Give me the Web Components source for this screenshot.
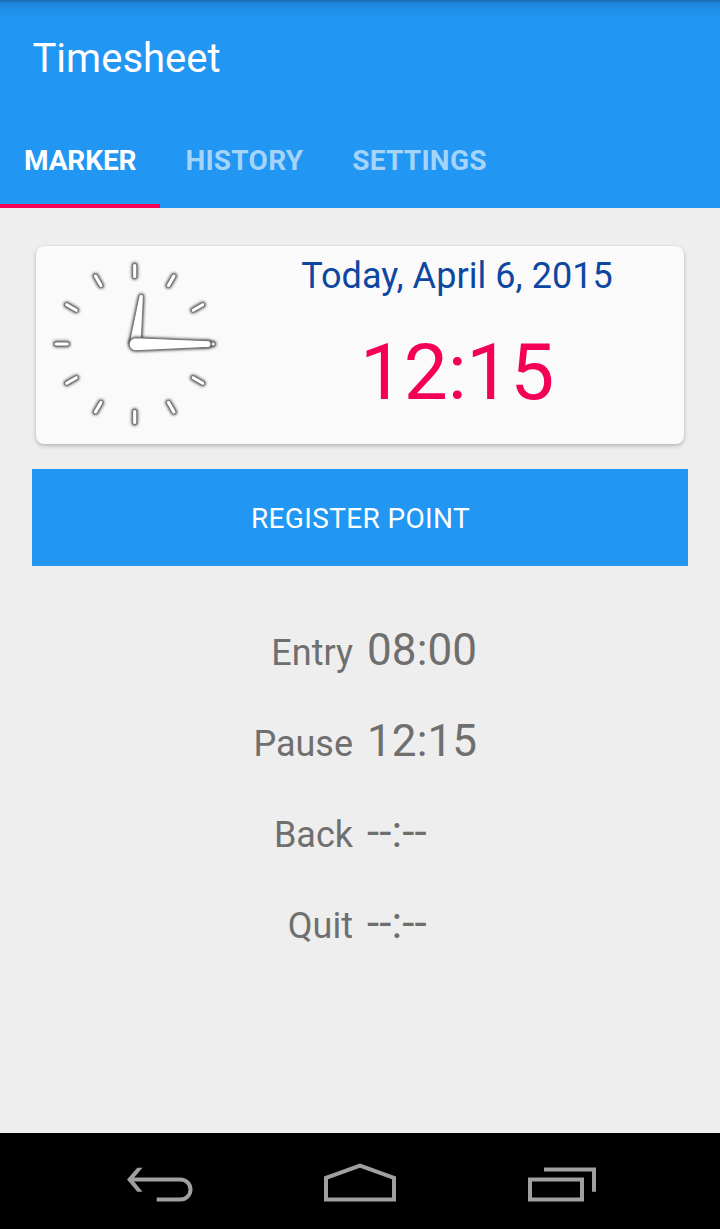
<!DOCTYPE html>
<html lang="en">
<head>
<meta charset="utf-8">
<title>Timesheet</title>
<style>
  html, body {
    margin: 0;
    height: 100%;
  }
  body {
    overflow: hidden;
    font-family: Roboto, "Noto Sans", sans-serif;
    background: #eeeeee;
  }
</style>
</head>
<body>
<time-sheet></time-sheet>

<script>
// shared base: puts css + markup in an open shadow root
class Base extends HTMLElement {
  constructor() {
    super();
    const template = document.createElement("template");
    template.innerHTML = `<style>${this.css}</style>${this.markup}`;
    this.attachShadow({ mode: "open" }).appendChild(
      document.importNode(template.content, true)
    );
  }
}

class AppBar extends Base {
  get css() {
    return `
      :host {
        display: flex;
        flex-direction: column;
        height: 207.67px;
        color: #fff;
        background: linear-gradient(rgba(0,0,0,.3), rgba(0,0,0,.12) 3px, rgba(0,0,0,.04) 10px, transparent 20px) #2196f3;
      }
      h1 {
        margin: 0;
        padding-left: 32.5px;
        height: 114px;
        line-height: 117px;
        font-size: 40px;
        font-weight: 400;
      }
      nav {
        display: flex;
        height: 93.67px;
      }
    `;
  }
  get markup() {
    return `<h1><slot name="title"></slot></h1><nav><slot></slot></nav>`;
  }
}

class AppTab extends Base {
  get css() {
    return `
      :host {
        display: block;
        box-sizing: border-box;
        height: 100%;
        padding: 0 24px 0 25px;
        line-height: 94px;
        font-size: 28px;
        font-weight: 700;
        letter-spacing: 0.25px;
        white-space: nowrap;
        color: rgba(255,255,255,.6);
      }
      :host([active]) {
        padding-left: 24px;
        letter-spacing: -0.1px;
        color: #fff;
        box-shadow: inset 0 -4px #f50057;
      }
    `;
  }
  get markup() {
    return `<slot></slot>`;
  }
}

class AnalogClock extends Base {
  get css() {
    return `
      :host { display: block; width: 198px; height: 198px; }
      svg { display: block; }
      g {
        fill: #fff;
        stroke: #787878;
        stroke-width: 1.1;
        filter: drop-shadow(0 0 1.6px rgba(0,0,0,.5)) drop-shadow(0 0 1.8px rgba(0,0,0,.45));
      }
    `;
  }
  get markup() {
    const ticks = Array.from({ length: 12 }, (_, i) =>
      `<rect x="-2.1" y="-80.6" width="4.2" height="15.2" rx="2.1" transform="rotate(${i * 30})"/>`
    ).join("");
    return `
      <svg width="198" height="198" viewBox="-98.7 -98 198 198">
        <g>${ticks}</g>
        <g><path d="M-5.4 -1 L4.2 -47.5 Q4.8 -49.7 6.7 -49.7 Q8.7 -49.7 8.7 -47.2 L6.4 1Z"/></g>
        <g><path d="M1 -6.2 L74 -3.2 Q76 -3 76 0.2 Q76 3.2 74 3.4 L1 6.8 A6.5 6.5 0 0 1 1 -6.2Z"/></g>
      </svg>`;
  }
}

class ClockCard extends Base {
  get css() {
    return `
      :host {
        display: flex;
        margin: 0 4px;
        height: 198px;
        border-radius: 8px;
        background: #fafafa;
        box-shadow: 0 2px 4px rgba(0,0,0,.22), 0 0 2px rgba(0,0,0,.08);
      }
      .info {
        flex: 1;
        display: flex;
        flex-direction: column;
        align-items: center;
        padding-right: 4px;
      }
      .date {
        line-height: 42px;
        padding-top: 9px;
        font-size: 36px;
        letter-spacing: 0.05px;
        color: #0d47a1;
      }
      .time {
        line-height: 94px;
        padding-top: 28px;
        font-size: 78.5px;
        letter-spacing: -0.3px;
        color: #f50057;
      }
    `;
  }
  get markup() {
    return `
      <analog-clock></analog-clock>
      <div class="info">
        <div class="date"><slot name="date"></slot></div>
        <div class="time"><slot name="time"></slot></div>
      </div>`;
  }
}

class FlatButton extends Base {
  get css() {
    return `
      :host { display: block; height: 96.34px; }
      button {
        display: block;
        width: 100%;
        height: 100%;
        padding: 3px 0 0 1px;
        border: 0;
        font: 400 28px Roboto, sans-serif;
        letter-spacing: 0.35px;
        color: #fff;
        background: #2196f3;
      }
    `;
  }
  get markup() {
    return `<button><slot></slot></button>`;
  }
}

class PointRow extends Base {
  get css() {
    return `
      :host {
        display: grid;
        grid-template-columns: 321px 1fr;
        column-gap: 14px;
        align-items: baseline;
        height: 91px;
        line-height: 60px;
        color: #6f6f6f;
      }
      .label { text-align: right; font-size: 36px; }
      .value { font-size: 44px; letter-spacing: 0.1px; }
    `;
  }
  get markup() {
    return `
      <span class="label"><slot name="label"></slot></span>
      <span class="value"><slot></slot></span>`;
  }
}

class NavBar extends Base {
  get css() {
    return `
      :host {
        display: flex;
        justify-content: center;
        height: 95.67px;
        background: #000;
      }
      svg {
        display: block;
        width: 200px;
        height: 96px;
        fill: none;
        stroke: #a0a0a0;
        stroke-width: 4;
      }
    `;
  }
  get markup() {
    return `
      <svg viewBox="60 1133 200 96">
        <path d="M131 1179.5H180.5A10 10 0 0 1 180.5 1199.5H156.7"/>
        <path d="M127 1179.5L137.3 1167.7H142.5L132.5 1179.5L142.5 1191.7H137.3Z" fill="#a0a0a0" stroke="none"/>
      </svg>
      <svg viewBox="260 1133 200 96">
        <path d="M326 1177.9L360 1165.7L394 1177.9V1199.5H326Z"/>
      </svg>
      <svg viewBox="460 1133 200 96">
        <path d="M530 1179.5H582V1199.5H530Z"/>
        <path d="M544 1169.5H594V1191.7"/>
      </svg>`;
  }
}

class TimeSheet extends Base {
  get css() {
    return `
      :host {
        display: flex;
        flex-direction: column;
        height: 1229px;
        background: #eeeeee;
      }
      main {
        flex: 1;
        padding: 38px 32px 0;
      }
      flat-button { margin-top: 25.66px; }
      .points { padding-top: 54px; }
    `;
  }
  get markup() {
    return `
      <app-bar>
        <span slot="title">Timesheet</span>
        <app-tab active>MARKER</app-tab>
        <app-tab>HISTORY</app-tab>
        <app-tab>SETTINGS</app-tab>
      </app-bar>
      <main>
        <clock-card>
          <span slot="date">Today, April 6, 2015</span>
          <span slot="time">12:15</span>
        </clock-card>
        <flat-button>REGISTER POINT</flat-button>
        <div class="points">
          <point-row><span slot="label">Entry</span>08:00</point-row>
          <point-row><span slot="label">Pause</span>12:15</point-row>
          <point-row><span slot="label">Back</span>--:--</point-row>
          <point-row><span slot="label">Quit</span>--:--</point-row>
        </div>
      </main>
      <nav-bar></nav-bar>`;
  }
}

customElements.define("app-tab", AppTab);
customElements.define("app-bar", AppBar);
customElements.define("analog-clock", AnalogClock);
customElements.define("clock-card", ClockCard);
customElements.define("flat-button", FlatButton);
customElements.define("point-row", PointRow);
customElements.define("nav-bar", NavBar);
customElements.define("time-sheet", TimeSheet);
</script>
</body>
</html>
